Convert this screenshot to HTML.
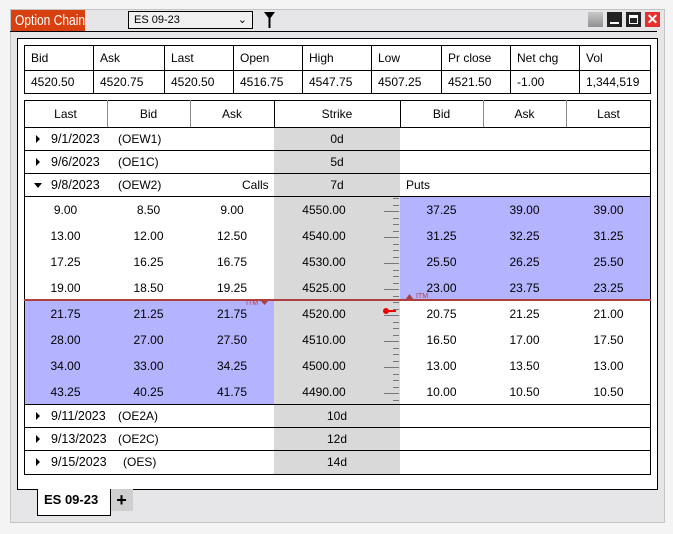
<!DOCTYPE html>
<html><head><meta charset="utf-8"><style>
*{box-sizing:border-box;margin:0;padding:0}
body{width:673px;height:534px;background:#f4f4f4;font-family:"Liberation Sans",sans-serif;font-size:12px;color:#000;position:relative;overflow:hidden}
.a{position:absolute}
.win{left:10px;top:9px;width:655px;height:514px;background:#e6e6e8;border:1px solid #c4c4c4}
.t{display:flex;align-items:center;position:absolute;white-space:nowrap}
.c{justify-content:center}
.vl{position:absolute;width:1px;background:#000}
.hl{position:absolute;height:1px;background:#000}
</style></head><body>
<div class="a win"></div>
<div class="a" style="left:11px;top:10px;width:74px;height:21px;background:#d9400f;overflow:hidden"><div style="color:#fff;font-size:15px;line-height:21px;padding-left:5px;white-space:nowrap;transform:scaleX(0.8);transform-origin:0 0">Option Chain</div></div>
<div class="hl" style="left:10px;top:31px;width:647px"></div>
<div class="a" style="left:128px;top:11px;width:125px;height:18px;border:1px solid #000;background:#f0f0f0;font-size:11px;line-height:16px;padding-left:5px">ES 09-23<span class="a" style="right:5px;top:0;font-size:11px">&#8964;</span></div>
<svg class="a" style="left:264px;top:12px" width="12" height="16"><path d="M0 0H11L6.5 6V16H4.5V6Z" fill="#000"/></svg>
<div class="a" style="left:588px;top:12px;width:15px;height:15px;background:linear-gradient(#c8c8c8,#909090)"></div>
<div class="a" style="left:607px;top:12px;width:15px;height:15px;background:#222"><div class="a" style="left:3px;top:10px;width:9px;height:2px;background:#fff"></div></div>
<div class="a" style="left:626px;top:12px;width:15px;height:15px;background:#222"><div class="a" style="left:3px;top:3px;width:9px;height:9px;border:1.5px solid #fff;border-top-width:3px"></div></div>
<div class="a" style="left:645px;top:12px;width:15px;height:15px;background:#e53030;color:#fff;font-weight:bold;font-size:14px;line-height:15px;text-align:center">✕</div>

<div class="a" style="left:17px;top:38px;width:641px;height:452px;background:#fff;border:1px solid #000"></div>

<div class="a" style="left:24px;top:45px;width:627px;height:49px;border:1px solid #000"></div>
<div class="hl" style="left:24px;top:70px;width:627px"></div>

<div class="a" style="left:274px;top:127px;width:126px;height:347px;background:#d9d9d9"></div>
<div class="a" style="left:24px;top:300px;width:250px;height:104px;background:#b3b3ff"></div>
<div class="a" style="left:400px;top:196px;width:250px;height:104px;background:#b3b3ff"></div>
<div class="a" style="left:24px;top:100px;width:627px;height:375px;border:1px solid #000"></div>
<div class="a" style="left:24px;top:299px;width:627px;height:2px;background:#b04040"></div>
<svg class="a" style="left:380px;top:196px" width="30" height="210">
<g stroke="#777" stroke-width="1" id="ticks"></g>
<circle cx="6" cy="115" r="3" fill="#e00"/><line x1="6" y1="115" x2="16" y2="115" stroke="#e00" stroke-width="2"/>
</svg>
<div class="a" style="left:246px;top:300px;font-size:7px;color:#b04040">ITM</div>
<svg class="a" style="left:260px;top:300px" width="10" height="5"><path d="M0 0H9L4.5 5Z" fill="#b04040"/></svg>
<svg class="a" style="left:405px;top:294px" width="10" height="6"><path d="M0 6H9L4.5 0Z" fill="#b04040"/></svg>
<div class="a" style="left:416px;top:293px;font-size:7px;color:#b04040">ITM</div>

<div class="a" style="left:110px;top:489px;width:23px;height:22px;background:#cfcfcf;font-size:18px;line-height:22px;text-align:center;font-weight:bold">+</div>
<div class="a" style="left:37px;top:489px;width:74px;height:27px;background:#fff;border:1px solid #000;border-top:none;font-weight:bold;font-size:13px;line-height:22px;padding-left:6px">ES 09-23</div>

<script>
function d(h){document.body.insertAdjacentHTML('beforeend',h)}
var c1=[24,93,164,233,302,371,441,510,579,651];
var h1=["Bid","Ask","Last","Open","High","Low","Pr close","Net chg","Vol"];
var v1=["4520.50","4520.75","4520.50","4516.75","4547.75","4507.25","4521.50","-1.00","1,344,519"];
for(var i=0;i<9;i++){
 if(i>0)d('<div class="vl" style="left:'+c1[i]+'px;top:45px;height:49px"></div>');
 d('<div class="t" style="left:'+(c1[i]+7)+'px;top:46px;height:24px">'+h1[i]+'</div>');
 d('<div class="t" style="left:'+(c1[i]+7)+'px;top:71px;height:22px">'+v1[i]+'</div>');
}
var c2=[24,107,190,274,400,483,566,651];
var h2=["Last","Bid","Ask","Strike","Bid","Ask","Last"];
for(var i=0;i<7;i++){
 if(i>0)d('<div class="vl" style="left:'+c2[i]+'px;top:100px;height:27px;background:'+(i==3||i==4?'#000':'#888')+'"></div>');
 d('<div class="t c" style="left:'+c2[i]+'px;width:'+(c2[i+1]-c2[i])+'px;top:101px;height:26px">'+h2[i]+'</div>');
}
[127,150,173,196,404,427,450].forEach(function(y){d('<div class="hl" style="left:24px;top:'+y+'px;width:627px"></div>')});
var ex=[[127,"9/1/2023","(OEW1)","0d"],[150,"9/6/2023","(OE1C)","5d"],[173,"9/8/2023","(OEW2)","7d"],[404,"9/11/2023","(OE2A)","10d"],[427,"9/13/2023","(OE2C)","12d"],[450,"9/15/2023","(OES)","14d"]];
ex.forEach(function(e,k){
 var tri=k==2?'<svg width="9" height="9" style="margin-right:8px"><path d="M0 2H8L4 7Z"/></svg>':'<svg width="9" height="9" style="margin-right:8px"><path d="M2 0V8L6 4Z"/></svg>';
 d('<div class="t" style="left:34px;top:'+(e[0]+1)+'px;height:22px;font-size:12.5px">'+tri+e[1]+'</div>');
 d('<div class="t" style="left:'+(k==5?123:118)+'px;top:'+(e[0]+1)+'px;height:22px">'+e[2]+'</div>');
 d('<div class="t c" style="left:274px;width:126px;top:'+(e[0]+1)+'px;height:22px">'+e[3]+'</div>');
});
d('<div class="t" style="left:242px;top:174px;height:22px">Calls</div>');
d('<div class="t" style="left:406px;top:174px;height:22px">Puts</div>');
var rows=[["9.00","8.50","9.00","4550.00","37.25","39.00","39.00"],["13.00","12.00","12.50","4540.00","31.25","32.25","31.25"],["17.25","16.25","16.75","4530.00","25.50","26.25","25.50"],["19.00","18.50","19.25","4525.00","23.00","23.75","23.25"],["21.75","21.25","21.75","4520.00","20.75","21.25","21.00"],["28.00","27.00","27.50","4510.00","16.50","17.00","17.50"],["34.00","33.00","34.25","4500.00","13.00","13.50","13.00"],["43.25","40.25","41.75","4490.00","10.00","10.50","10.50"]];
rows.forEach(function(r,k){var y=197+k*26;
 for(var i=0;i<7;i++){var l=c2[i],w=c2[i+1]-c2[i];if(i==3){w=100}
 d('<div class="t c" style="left:'+l+'px;width:'+w+'px;top:'+y+'px;height:25px">'+r[i]+'</div>');}
});
var g='';for(var i=0;i<32;i++){var y=2+6.5*i;var yy=Math.round(y)+0.5;var long=(i%4==2);g+='<line x1="'+(long?4:13)+'" y1="'+yy+'" x2="19" y2="'+yy+'"/>';}
document.getElementById('ticks').innerHTML=g;
</script>
</body></html>
